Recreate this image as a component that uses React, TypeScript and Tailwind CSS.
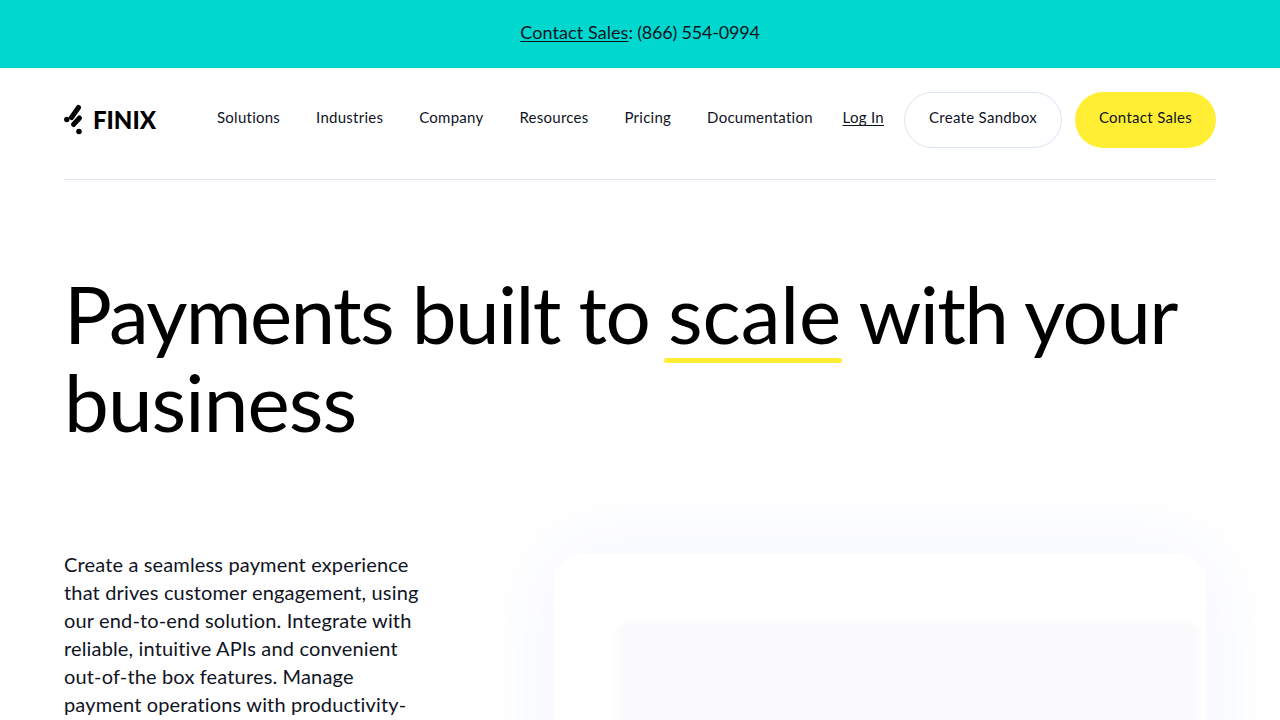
const navItems = ['Solutions', 'Industries', 'Company', 'Resources', 'Pricing', 'Documentation'];

function Logo() {
  return (
    <div className="flex w-[92px] items-center gap-[9px]">
      <svg width="20" height="32" viewBox="0 0 20 32" aria-hidden="true">
        <circle cx="2.8" cy="15.5" r="2.7" fill="#000" />
        <circle cx="15" cy="27.5" r="2.8" fill="#000" />
        <path d="M7.5 13.5 14.5 3.5" stroke="#000" strokeWidth="5" strokeLinecap="round" />
        <path d="M9.5 20.5 15.5 14" stroke="#000" strokeWidth="5" strokeLinecap="round" />
      </svg>
      <span className="text-[24px] leading-none font-black text-black font-['Lato',sans-serif]">FINIX</span>
    </div>
  );
}

function Header() {
  return (
    <header className="mx-16 flex h-[112px] items-center border-b border-[#dde3ec] pb-2">
      <Logo />
      <nav className="ml-[61px] flex items-center gap-9 text-[15px] tracking-[0.25px] text-[#10141f]">
        {navItems.map((item) => (
          <a key={item} className="-mt-1">{item}</a>
        ))}
      </nav>
      <div className="ml-auto flex items-center text-[15px] tracking-[0.3px] text-[#10141f]">
        <a className="-mt-1 mr-5 underline underline-offset-2">Log In</a>
        <a className="flex h-14 w-[158px] items-center justify-center rounded-[28px] border border-[#d9e3f5] bg-white pb-1">Create Sandbox</a>
        <a className="ml-[13px] flex h-14 w-[141px] items-center justify-center rounded-[28px] bg-[#ffee34] pb-1">Contact Sales</a>
      </div>
    </header>
  );
}

export default function App() {
  return (
    <div className="h-[720px] w-[1280px] overflow-hidden bg-white font-['Lato',sans-serif] text-black">
      <div className="flex h-[68px] items-center justify-center bg-[#00d8cf] pb-[3px] text-[18px] text-[#10141f]">
        <a className="tracking-[0.08px] underline underline-offset-2">Contact Sales</a>
        <span className="tracking-[-0.2px]">: (866) 554-0994</span>
      </div>
      <Header />
      <main className="px-16">
        <h1 className="mt-[89px] text-[80px] leading-[88px] font-normal tracking-[-1.65px]">
          Payments built to{' '}
          <span className="relative inline-block tracking-[-0.1px]">
            scale
            <span className="absolute -right-px -left-1 -bottom-[6px] h-[5px] rounded-full bg-[#ffee34]" />
          </span>{' '}
          with your <span className="tracking-[-0.9px]">business</span>
        </h1>
        <div className="mt-[105px] flex">
          <p className="w-[362px] shrink-0 text-[20px] leading-7 tracking-[0.15px] text-[#10141f]">
            Create a seamless payment experience that drives customer engagement, using our end-to-end solution. Integrate with reliable, intuitive APIs and convenient out-of-the box features. Manage payment operations with productivity-
          </p>
          <div className="mt-[3px] ml-[128px] h-[400px] w-[652px] rounded-t-[30px] bg-white pt-[72px] pl-[65px] shadow-[0_0_80px_rgba(60,100,255,0.07)]">
            <div className="h-[300px] w-[578px] rounded-t bg-[#fbfbfe] shadow-[0_0_14px_rgba(0,0,0,0.03)]" />
          </div>
        </div>
      </main>
    </div>
  );
}
